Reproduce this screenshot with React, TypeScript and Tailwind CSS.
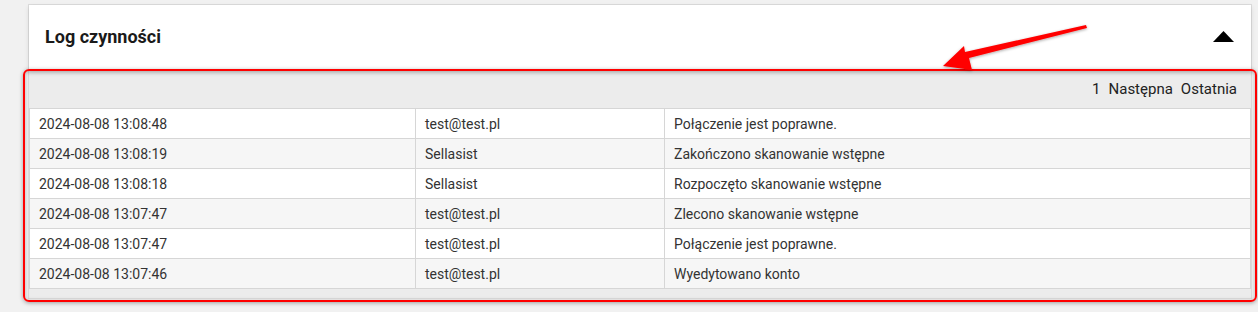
import React from "react";

const rows = [
  ["2024-08-08 13:08:48", "test@test.pl", "Połączenie jest poprawne."],
  ["2024-08-08 13:08:19", "Sellasist", "Zakończono skanowanie wstępne"],
  ["2024-08-08 13:08:18", "Sellasist", "Rozpoczęto skanowanie wstępne"],
  ["2024-08-08 13:07:47", "test@test.pl", "Zlecono skanowanie wstępne"],
  ["2024-08-08 13:07:47", "test@test.pl", "Połączenie jest poprawne."],
  ["2024-08-08 13:07:46", "test@test.pl", "Wyedytowano konto"],
];

export default function App() {
  return (
    <div
      className="relative w-[1258px] h-[312px] bg-[#f1f1f1] overflow-hidden pl-[28px] pt-[4px]"
      style={{ fontFamily: "Roboto, 'Liberation Sans', sans-serif" }}
    >
      <div className="w-[1224px] border border-[#dcdcdc] bg-[#ececec]">
        <div className="h-[65px] bg-white flex items-center justify-between pl-[16px] pr-[17px] relative z-10 shadow-[0_2px_5px_rgba(0,0,0,0.12)]">
          <span className="text-[18px] font-bold text-[#1a1a1a] mt-[-2px]">Log czynności</span>
          <svg width="21" height="11" viewBox="0 0 21 11" className="mt-[-2px]">
            <polygon points="10.5,0 21,11 0,11" fill="#000" />
          </svg>
        </div>
        <div className="pb-[9px]">
          <div className="h-[38px] flex items-center justify-end pr-[14px] text-[15px] text-[#222] gap-[8px] pt-[1px]">
            <span>1</span>
            <span>Następna</span>
            <span>Ostatnia</span>
          </div>
          <table className="w-full border-collapse text-[14px] text-[#333] table-fixed">
            <colgroup>
              <col className="w-[386px]" />
              <col className="w-[249px]" />
              <col />
            </colgroup>
            <tbody>
              {rows.map((r, i) => (
                <tr key={i} className={i % 2 === 0 ? "bg-white" : "bg-[#f6f6f6]"}>
                  {r.map((c, j) => (
                    <td
                      key={j}
                      className="h-[30px] border border-[#d6d6d6] pl-[9px] pt-[0px] align-middle leading-none"
                    >
                      {c}
                    </td>
                  ))}
                </tr>
              ))}
            </tbody>
          </table>
        </div>
      </div>

      {/* red annotation rectangle */}
      <div className="absolute z-20 left-[23px] top-[69px] w-[1234px] h-[233px] border-2 border-[#ff0000] rounded-[6px] shadow-[0_1px_4px_rgba(0,0,0,0.35),inset_0_1px_4px_rgba(0,0,0,0.25)] pointer-events-none" />

      {/* arrow */}
      <svg
        className="absolute z-30 left-0 top-0 pointer-events-none"
        width="1258"
        height="312"
        viewBox="0 0 1258 312"
      >
        <defs>
          <filter id="sh" x="-10%" y="-50%" width="120%" height="200%">
            <feDropShadow dx="0" dy="1" stdDeviation="1.5" floodColor="#000" floodOpacity="0.35" />
          </filter>
        </defs>
        <polygon
          points="1086,25 1087,28 969,58 972,70 943,66 964,46 965,52"
          fill="#ff0000"
          filter="url(#sh)"
        />
      </svg>
    </div>
  );
}
